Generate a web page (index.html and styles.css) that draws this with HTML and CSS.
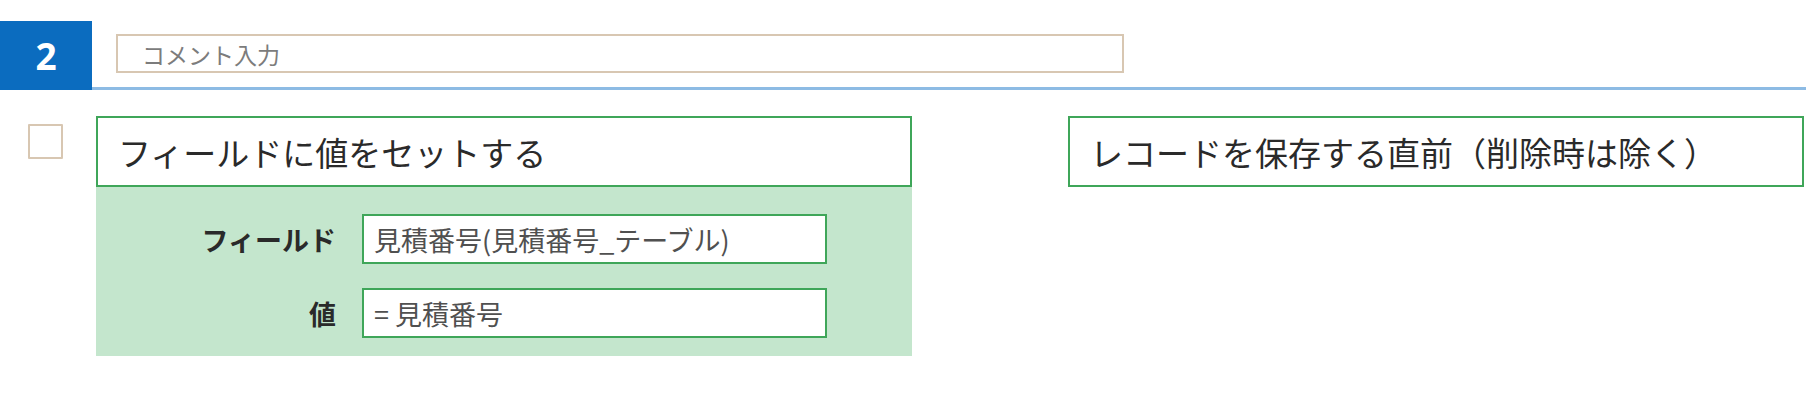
FILE: index.html
```html
<!DOCTYPE html>
<html>

<head>
    <meta charset="UTF-8">
    <title>アクション設定</title>
    <link rel="stylesheet" href="styles.css">
</head>

<body>
    <div class="step-head">
        <div class="step-no">2</div>
        <div class="step-bar">
            <input type="text" class="comment" placeholder="コメント入力">
        </div>
    </div>

    <div class="action">
        <span class="check"></span>
        <div class="left">
            <div class="title-box">フィールドに値をセットする</div>
            <div class="fields">
                <div class="label">フィールド</div>
                <input type="text" class="field" value="見積番号(見積番号_テーブル)">
                <div class="label">値</div>
                <input type="text" class="field" value="= 見積番号">
            </div>
        </div>
        <div class="right">
            <div class="title-box">レコードを保存する直前（削除時は除く）</div>
        </div>
    </div>
</body>

</html>
```

FILE: styles.css
```css
body {
    margin: 0;
    background: #fff;
    color: #2a2a2a;
    font-family: "Noto Sans CJK JP", "Noto Sans", sans-serif;
}

.step-head {
    display: flex;
    height: 69px;
    margin-top: 21px;
}

.step-no {
    width: 92px;
    background-color: #0b6cbf;
    color: #fff;
    font-family: "Noto Sans", sans-serif;
    font-size: 37px;
    font-weight: bold;
    display: flex;
    align-items: center;
    justify-content: center;
}

.step-bar {
    flex: 1;
    box-sizing: border-box;
    padding: 13px 0 0 24px;
    border-bottom: 3px solid #8dbbe4;
}

.comment {
    width: 1008px;
    height: 39px;
    box-sizing: border-box;
    margin: 0;
    padding: 0 24px;
    border: 2px solid #d8c7b2;
    font-family: inherit;
    font-size: 23px;
    outline: none;
}

.comment::placeholder {
    color: #7c7c7c;
}

.action {
    display: flex;
    align-items: flex-start;
    margin-top: 26px;
}

.check {
    width: 35px;
    height: 35px;
    box-sizing: border-box;
    margin: 8px 33px 0 28px;
    border: 2px solid #d8c7b2;
    border-radius: 1px;
}

.left {
    width: 816px;
}

.right {
    width: 736px;
    margin-left: 156px;
}

.title-box {
    height: 71px;
    box-sizing: border-box;
    padding-left: 20px;
    border: 2px solid #3fa659;
    background: #fff;
    display: flex;
    align-items: center;
    font-size: 33px;
}

.fields {
    display: grid;
    grid-template-columns: 240px 465px;
    column-gap: 26px;
    row-gap: 24px;
    align-items: center;
    padding: 27px 0 18px;
    background-color: #c4e6cd;
}

.label {
    text-align: right;
    font-size: 27px;
    font-weight: bold;
}

.field {
    height: 50px;
    box-sizing: border-box;
    margin: 0;
    padding: 0 10px;
    border: 2px solid #3fa659;
    background: #fff;
    color: #505050;
    font-family: inherit;
    font-size: 27px;
    outline: none;
}
```
